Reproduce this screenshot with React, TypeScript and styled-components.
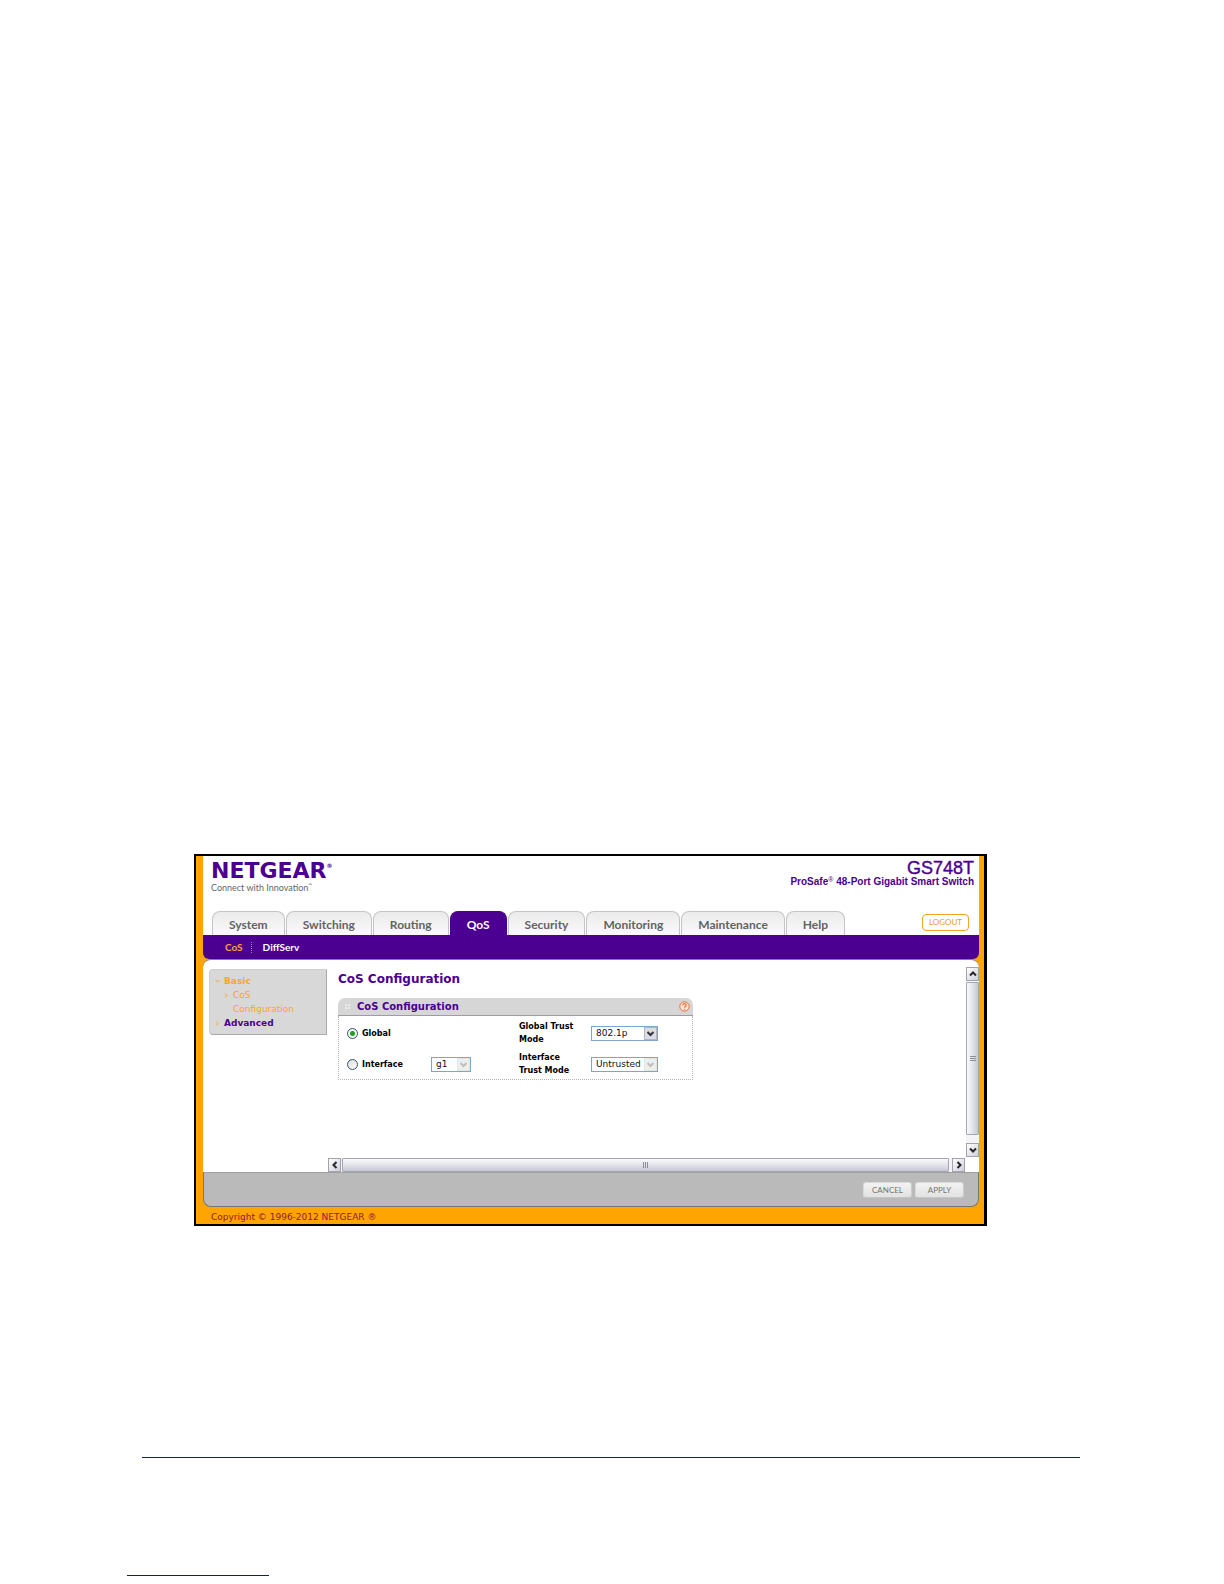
import React from "react";
import styled, { createGlobalStyle } from "styled-components";

const verdana = `"DejaVu Sans", Verdana, sans-serif`;
const futura = `Lato, Futura, sans-serif`;
const arial = `"Liberation Sans", Arial, sans-serif`;
const purple = "#4b0091";
const orange = "#ffa400";

const GlobalStyle = createGlobalStyle`
  *, *::before, *::after { box-sizing: border-box; }
  body { margin: 0; background: #fff; font-family: ${verdana}; }
  h1, h2, p, ul { margin: 0; padding: 0; }
  a { text-decoration: none; color: inherit; }
`;

const Page = styled.div`
  display: flex;
  flex-direction: column;
  min-height: 100vh;
  padding: 854px 144px 8px 127px;
`;

const Figure = styled.section`
  margin: 0 93px 0 67px;
  border: 2px solid #000;
  border-right-width: 3px;
  background: ${orange};
  padding: 0 5px 0 7px;
`;

const Header = styled.header`
  background: #fff;
`;

const Brand = styled.div`
  display: flex;
  justify-content: space-between;
  height: 55px;
  padding: 3px 5px 0 8px;
`;

const Logo = styled.div`
  color: ${purple};
  font: 700 22px/24px ${verdana};

  sup {
    font-size: 6px;
    line-height: 6px;
    vertical-align: 10px;
  }
`;

const Tagline = styled.p`
  color: #666;
  font: 400 9px/10px ${futura};

  sup {
    font-size: 5px;
    line-height: 5px;
  }
`;

const Product = styled.div`
  color: ${purple};
  text-align: right;
  font-family: ${arial};
`;

const Model = styled.h1`
  font-size: 18px;
  font-weight: 400;
  line-height: 18px;
  -webkit-text-stroke: 0.4px ${purple};
`;

const ModelName = styled.p`
  font-size: 10px;
  line-height: 10px;
  font-weight: 700;

  sup {
    font-size: 7px;
    line-height: 4px;
    font-weight: 400;
    vertical-align: 3px;
  }
`;

const TabRow = styled.nav`
  display: flex;
  align-items: flex-end;
  gap: 1px;
  padding: 0 10px 0 9px;
`;

const Tab = styled.a<{ $active?: boolean }>`
  height: 24px;
  padding: 0 16px;
  border: 1px solid ${(p) => (p.$active ? purple : "#c4c4c4")};
  border-bottom: 0;
  border-radius: 8px 8px 0 0;
  background: ${(p) => (p.$active ? purple : "linear-gradient(#ebebeb, #fafafa)")};
  color: ${(p) => (p.$active ? "#fff" : "#636363")};
  font: 700 12px/25px ${futura};
`;

const Logout = styled.button`
  align-self: center;
  height: 17px;
  margin: 0 0 2px auto;
  padding: 0 6px;
  border: 1px solid #f2a527;
  border-radius: 4px;
  background: #fff;
  color: #ef9c1b;
  font: 400 8px/14px ${futura};
`;

const SubNav = styled.nav`
  display: flex;
  align-items: center;
  height: 24px;
  padding-left: 22px;
  border-radius: 0 0 6px 6px;
  background: ${purple};
`;

const SubLink = styled.a<{ $active?: boolean }>`
  color: ${(p) => (p.$active ? "#ffa03c" : "#fff")};
  font: 700 10px/11px ${futura};

  & + & {
    margin-left: 8px;
    padding-left: 11px;
    border-left: 1px dotted #a884d0;
  }
`;

const Workspace = styled.div`
  display: grid;
  grid-template-columns: 125px minmax(0, 1fr) 14px;
  grid-template-rows: 190px 14px;
  row-gap: 1px;
  padding-top: 7px;
  border-top: 1px solid #8a78a0;
  border-radius: 8px 8px 0 0;
  background: #fff;
`;

const SideBar = styled.nav`
  grid-row: 1 / 3;
  align-self: start;
  margin: 2px 1px 0 6px;
  padding: 4px 0 4px 5px;
  border: 1px solid #cfcfcf;
  border-right-color: #a9a9a9;
  border-bottom-color: #a9a9a9;
  border-radius: 4px 0 0 4px;
  background: #d8d8d8;
  font-size: 9px;
  line-height: 14px;
`;

const SideLink = styled.a<{ $open?: boolean; $child?: boolean }>`
  display: grid;
  grid-template-columns: 9px 1fr;
  align-items: start;
  padding-left: ${(p) => (p.$child ? "9px" : "0")};
  color: ${(p) => (p.$open ? "#fba619" : purple)};
  font-weight: ${(p) => (p.$child ? 400 : 700)};

  svg {
    margin-top: 5px;
  }
`;

const Main = styled.main`
  padding: 4px 0 0 10px;
`;

const Title = styled.h1`
  color: ${purple};
  font-size: 12px;
  line-height: 16px;
`;

const Panel = styled.section`
  width: 355px;
  max-width: 100%;
  margin-top: 11px;
`;

const PanelHead = styled.header`
  display: flex;
  align-items: center;
  gap: 6px;
  height: 18px;
  padding: 0 3px 0 6px;
  border-bottom: 1px solid #9d9d9d;
  border-radius: 7px 7px 0 0;
  background: #d6d6d6;
`;

const PanelTitle = styled.h2`
  flex: 1;
  color: ${purple};
  font-size: 10px;
  line-height: 14px;
`;

const HelpButton = styled.button`
  display: flex;
  padding: 0;
  border: 0;
  background: none;
`;

const Form = styled.form`
  display: grid;
  grid-template-columns: 84px 88px 72px 1fr;
  grid-auto-rows: 26px;
  row-gap: 5px;
  align-items: center;
  padding: 4px 0 2px 8px;
  border: 1px dotted #b5b5b5;
  border-top: 0;
  font-size: 8px;
  font-weight: 700;
  line-height: 13px;
`;

const RadioLabel = styled.label<{ $wide?: boolean }>`
  display: flex;
  align-items: center;
  gap: 4px;
  grid-column: ${(p) => (p.$wide ? "1 / 3" : "auto")};
`;

const Radio = styled.input`
  appearance: none;
  width: 11px;
  height: 11px;
  margin: 0;
  border: 1px solid #33566f;
  border-radius: 50%;
  background: linear-gradient(135deg, #dcdcd7, #fff);

  &:checked {
    background: radial-gradient(circle, #21a121 0 2px, #f4f6f2 3px);
  }
`;

const FieldLabel = styled.label`
  width: 64px;
`;

const SelectBox = styled.span<{ $width: number }>`
  position: relative;
  display: flex;
  width: ${(p) => p.$width}px;

  svg {
    position: absolute;
    top: 1px;
    right: 1px;
    pointer-events: none;
  }
`;

const Select = styled.select`
  appearance: none;
  width: 100%;
  height: 15px;
  margin: 0;
  padding: 0 14px 0 4px;
  border: 1px solid #7fa6c6;
  border-radius: 0;
  background: #fff;
  color: #111;
  font: 400 9px/12px ${verdana};
  opacity: 1;
`;

const VScroll = styled.div`
  display: flex;
  flex-direction: column;
  justify-self: end;
  background: #f4f4f6;
`;

const HScroll = styled.div`
  grid-column: 2;
  display: flex;
  background: #f4f4f6;
`;

const ScrollButton = styled.button`
  display: flex;
  flex: none;
  align-items: center;
  justify-content: center;
  width: 13px;
  height: 14px;
  padding: 0;
  border: 1px solid #a3a3ae;
  background: linear-gradient(135deg, #fff, #cfcfda);
`;

const Thumb = styled.div<{ $vertical?: boolean }>`
  display: flex;
  flex: 1;
  align-items: center;
  justify-content: center;
  margin: ${(p) => (p.$vertical ? "1px 0 8px" : "0 3px 0 1px")};
  border: 1px solid #a6a6b2;
  border-radius: 1px;
  background: linear-gradient(${(p) => (p.$vertical ? "90deg" : "180deg")}, #fafafc, #dedee8 60%, #c6c6d3);
`;

const ActionBar = styled.div`
  display: flex;
  justify-content: flex-end;
  align-items: center;
  gap: 3px;
  height: 35px;
  padding: 0 14px 0 0;
  border: 1px solid #777;
  border-top-color: #a0a0a0;
  border-radius: 0 0 8px 8px;
  background: #bababa;
`;

const ActionButton = styled.button`
  width: 49px;
  height: 16px;
  padding: 0;
  border: 1px solid #dadada;
  border-right-color: #cacaca;
  border-bottom-color: #c6c6c6;
  border-radius: 3px;
  background: linear-gradient(#f2f2f2, #e2e2e2);
  color: #747474;
  font: 400 8px/14px ${futura};
`;

const Copyright = styled.p`
  padding: 3px 0 0 8px;
  color: #8c1a3c;
  font-size: 9px;
  line-height: 14px;
`;

const PageRule = styled.hr`
  width: auto;
  height: 1px;
  margin: 231px 0 0 15px;
  border: 0;
  background: #14149a;
`;

const FootRule = styled.hr`
  width: 142px;
  height: 1px;
  margin: 117px 0 0;
  border: 0;
  background: #14149a;
`;

const Arrow = ({ down }: { down?: boolean }) => (
  <svg width="5" height="5" viewBox="0 0 5 5" fill="none" stroke="#f5a623" aria-hidden="true">
    <path d={down ? "M0.5 1l2 2 2-2" : "M1 0.5l2 2-2 2"} />
  </svg>
);

const chevrons = {
  up: "M1 5.500l3-3 3 3",
  down: "M1 2.500l3 3 3-3",
  left: "M5.500 1l-3 3 3 3",
  right: "M2.500 1l3 3-3 3",
};

const Chevron = ({ to }: { to: keyof typeof chevrons }) => (
  <svg width="8" height="8" viewBox="0 0 8 8" fill="none" stroke="#26262c" strokeWidth="2" aria-hidden="true">
    <path d={chevrons[to]} />
  </svg>
);

const Grip = ({ vertical }: { vertical?: boolean }) => (
  <svg width="6" height="6" viewBox="0 0 6 6" stroke="#8c8c9a" aria-hidden="true">
    <path d={vertical ? "M0 0.5h6M0 2.5h6M0 4.5h6" : "M0.5 0v6M2.5 0v6M4.5 0v6"} />
  </svg>
);

const Dots = () => (
  <svg width="7" height="7" viewBox="0 0 7 7" fill="#ececec" aria-hidden="true">
    <path d="M1 1h2v2H1zM4 1h2v2H4zM1 4h2v2H1zM4 4h2v2H4z" />
  </svg>
);

const HelpIcon = () => (
  <svg width="11" height="11" viewBox="0 0 11 11" fill="none" stroke="#ee6a35" aria-hidden="true">
    <circle cx="5.5" cy="5.5" r="4.7" fill="#fbe6d8" />
    <path d="M3.8 4.4c0-2.4 3.5-2.2 3.4-.1C7.1 5.500 5.500 5.400 5.500 6.800M5.500 7.700v1" strokeWidth="1.200" />
  </svg>
);

const DropArrow = ({ disabled }: { disabled?: boolean }) => (
  <svg width="13" height="13" viewBox="0 0 13 13" fill="none" aria-hidden="true">
    <rect
      x="0.5"
      y="0.5"
      width="12"
      height="12"
      fill={disabled ? "#eeeeea" : "#dcdce6"}
      stroke={disabled ? "#e4e4e0" : "#b4b4c2"}
    />
    <path d="M3.5 5l3 3 3-3" stroke={disabled ? "#bfbfbb" : "#33333c"} strokeWidth="2" />
  </svg>
);

interface PickerProps {
  id: string;
  width: number;
  value: string;
  disabled?: boolean;
  label?: string;
}

const Picker = ({ id, width, value, disabled, label }: PickerProps) => (
  <SelectBox $width={width}>
    <Select id={id} disabled={disabled} aria-label={label} defaultValue={value}>
      <option>{value}</option>
    </Select>
    <DropArrow disabled={disabled} />
  </SelectBox>
);

const tabs = ["System", "Switching", "Routing", "QoS", "Security", "Monitoring", "Maintenance", "Help"];

export default function App() {
  return (
    <Page>
      <GlobalStyle />
      <Figure>
        <Header>
          <Brand>
            <div>
              <Logo>
                NETGEAR<sup>®</sup>
              </Logo>
              <Tagline>
                Connect with Innovation<sup>™</sup>
              </Tagline>
            </div>
            <Product>
              <Model>GS748T</Model>
              <ModelName>
                ProSafe<sup>®</sup> 48-Port Gigabit Smart Switch
              </ModelName>
            </Product>
          </Brand>
          <TabRow aria-label="Sections">
            {tabs.map((name) => (
              <Tab key={name} href="#" $active={name === "QoS"}>
                {name}
              </Tab>
            ))}
            <Logout type="button">LOGOUT</Logout>
          </TabRow>
        </Header>
        <SubNav aria-label="QoS pages">
          <SubLink href="#" $active>
            CoS
          </SubLink>
          <SubLink href="#">DiffServ</SubLink>
        </SubNav>
        <Workspace>
          <SideBar aria-label="CoS pages">
            <SideLink href="#" $open>
              <Arrow down />
              Basic
            </SideLink>
            <SideLink href="#" $open $child>
              <Arrow />
              <span>
                CoS
                <br />
                Configuration
              </span>
            </SideLink>
            <SideLink href="#">
              <Arrow />
              Advanced
            </SideLink>
          </SideBar>
          <Main>
            <Title>CoS Configuration</Title>
            <Panel>
              <PanelHead>
                <Dots />
                <PanelTitle>CoS Configuration</PanelTitle>
                <HelpButton type="button" aria-label="Help">
                  <HelpIcon />
                </HelpButton>
              </PanelHead>
              <Form>
                <RadioLabel $wide>
                  <Radio type="radio" name="scope" defaultChecked />
                  Global
                </RadioLabel>
                <FieldLabel htmlFor="global-trust">Global Trust Mode</FieldLabel>
                <Picker id="global-trust" width={67} value="802.1p" />
                <RadioLabel>
                  <Radio type="radio" name="scope" />
                  Interface
                </RadioLabel>
                <Picker id="interface" width={40} value="g1" label="Interface" disabled />
                <FieldLabel htmlFor="interface-trust">Interface Trust Mode</FieldLabel>
                <Picker id="interface-trust" width={67} value="Untrusted" disabled />
              </Form>
            </Panel>
          </Main>
          <VScroll>
            <ScrollButton type="button" aria-label="Scroll up">
              <Chevron to="up" />
            </ScrollButton>
            <Thumb $vertical>
              <Grip vertical />
            </Thumb>
            <ScrollButton type="button" aria-label="Scroll down">
              <Chevron to="down" />
            </ScrollButton>
          </VScroll>
          <HScroll>
            <ScrollButton type="button" aria-label="Scroll left">
              <Chevron to="left" />
            </ScrollButton>
            <Thumb>
              <Grip />
            </Thumb>
            <ScrollButton type="button" aria-label="Scroll right">
              <Chevron to="right" />
            </ScrollButton>
          </HScroll>
        </Workspace>
        <ActionBar>
          <ActionButton type="button">CANCEL</ActionButton>
          <ActionButton type="button">APPLY</ActionButton>
        </ActionBar>
        <Copyright>Copyright © 1996-2012 NETGEAR ®</Copyright>
      </Figure>
      <PageRule />
      <FootRule />
    </Page>
  );
}
